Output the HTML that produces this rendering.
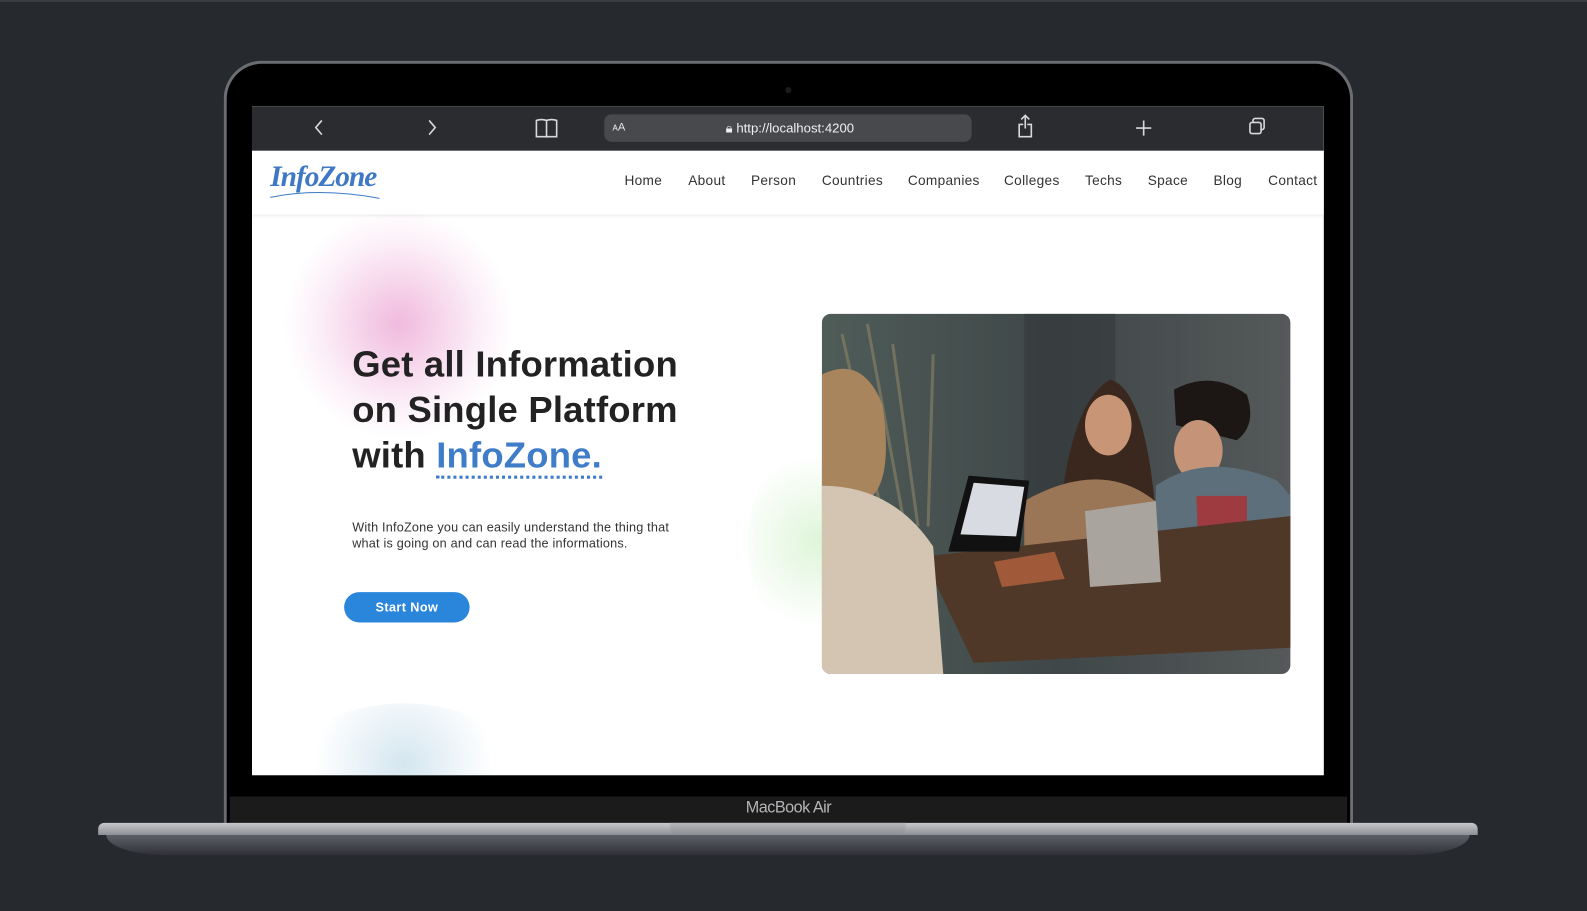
<!DOCTYPE html>
<html><head><meta charset="utf-8"><style>
*{margin:0;padding:0;box-sizing:border-box}
html,body{width:1587px;height:911px;background:#262a2f;overflow:hidden}
body{font-family:"Liberation Sans",sans-serif}
#wrap{position:absolute;left:0;top:0;width:1568px;height:900px;transform:scale(1.0121);transform-origin:0 0}
.abs{position:absolute}
</style></head><body><div id="wrap">
<div class="abs" style="left:0;top:0;width:1568px;height:2px;background:#3a3d42"></div>
<div class="abs" style="left:221px;top:60px;width:1116px;height:760px;border-radius:38px 38px 0 0;background:#000;border:3px solid #6a6d72;border-bottom:none"></div>
<div class="abs" style="left:776px;top:86px;width:6px;height:6px;border-radius:50%;background:#1c1c1e"></div>
<div class="abs" style="left:227px;top:787px;width:1104px;height:27px;background:#1b1b1c"></div>
<div class="abs" style="left:227px;top:790px;width:1104px;text-align:center;color:#b5b5b8;font-size:16px;letter-spacing:-0.5px">MacBook Air</div>
<div class="abs" style="left:97px;top:813px;width:1363px;height:12px;background:linear-gradient(#c8c9cc,#8d8f94);border-radius:6px 6px 0 0"></div>
<div class="abs" style="left:105px;top:825px;width:1347px;height:20px;background:linear-gradient(#5e6067,#2e3036);border-radius:0 0 60px 60px/0 0 20px 20px"></div>
<div class="abs" style="left:662px;top:813px;width:233px;height:12px;background:linear-gradient(#b7b8bb,#8c8d92);border-radius:0 0 8px 8px"></div>
<div class="abs" style="left:249px;top:105px;width:1059px;height:661px;background:#fff;overflow:hidden">
 <div class="abs" style="left:0;top:0;width:1059px;height:44px;background:#2a2c30"></div>
 <svg class="abs" style="left:0;top:0" width="1059" height="44" fill="none" stroke="#d8d8d8" stroke-width="1.6">
  <path d="M69 14l-6 7 6 7"/><path d="M175 14l6 7-6 7"/>
  <path d="M281 14v16h9c1 0 1 1 1 1v-17c-3-1-7-1-10 0zM301 14v16h-9c-1 0-1 1-1 1v-17c3-1 7-1 10 0z"/>
  <path d="M762 18h-4v12h12v-12h-4M764 22v-12M760 13l4-4 4 4"/>
  <path d="M881 14v15M873.5 21.5h15"/>
  <rect x="986" y="16" width="11" height="11" rx="2"/><path d="M989 16v-2c0-1 1-2 2-2h7c1 0 2 1 2 2v7c0 1-1 2-2 2h-1"/>
  <path d="M702 16a6 6 0 1 0 2 4M702 12v4h-4"/>
 </svg>
 <div class="abs" style="left:348px;top:8px;width:363px;height:27px;background:#48494d;border-radius:7px"></div>
 <div class="abs" style="left:356px;top:15px;color:#e5e5e5;font-size:11px">ᴀA</div>
 <div class="abs" style="left:468px;top:14px;color:#f0f0f0;font-size:13px">&#128274;&#xFE0E;<span style="font-size:13px"> http://localhost:4200</span></div>
 <div class="abs" style="left:0;top:44px;width:1059px;height:63px;background:#fff;box-shadow:0 2px 3px rgba(0,0,0,.08)"></div>
 <div class="abs" style="left:18px;top:54px;font-family:'Liberation Serif',serif;font-style:italic;font-weight:bold;font-size:29px;color:#3f78c4;letter-spacing:-1px">InfoZone</div>
 <svg class="abs" style="left:16px;top:80px" width="112" height="14"><path d="M2 10Q50 0 110 11" stroke="#3f78c4" fill="none" stroke-width="1"/></svg>
 <div class="abs" style="top:66px;left:0;width:1059px;font-size:13.5px;color:#333;letter-spacing:.3px">
  <span class="abs" style="left:368px">Home</span><span class="abs" style="left:431px">About</span><span class="abs" style="left:493px">Person</span><span class="abs" style="left:563px">Countries</span><span class="abs" style="left:648px">Companies</span><span class="abs" style="left:743px">Colleges</span><span class="abs" style="left:823px">Techs</span><span class="abs" style="left:885px">Space</span><span class="abs" style="left:950px">Blog</span><span class="abs" style="left:1004px">Contact</span>
 </div>
 <div class="abs" style="left:30px;top:100px;width:230px;height:230px;border-radius:50%;background:radial-gradient(circle,rgba(230,140,200,.6),rgba(240,180,220,.2) 50%,rgba(255,255,255,0) 70%)"></div>
 <div class="abs" style="left:40px;top:590px;width:220px;height:120px;border-radius:50%;background:radial-gradient(circle,rgba(170,205,225,.5),rgba(255,255,255,0) 70%)"></div>
 <div class="abs" style="left:490px;top:330px;width:140px;height:200px;border-radius:50%;background:radial-gradient(circle,rgba(190,235,180,.5),rgba(255,255,255,0) 70%)"></div>
 <div class="abs" style="left:99px;top:232px;font-size:36px;font-weight:bold;color:#222;line-height:45px;letter-spacing:.2px">Get all Information<br>on Single Platform<br>with <span style="color:#3f7dc9;border-bottom:3px dotted #3f7dc9">InfoZone.</span></div>
 <div class="abs" style="left:99px;top:408px;font-size:12.5px;color:#333;line-height:16px;letter-spacing:.2px">With InfoZone you can easily understand the thing that<br>what is going on and can read the informations.</div>
 <div class="abs" style="left:91px;top:480px;width:124px;height:30px;border-radius:15px;background:#2a86db;color:#fff;font-size:12.5px;font-weight:bold;text-align:center;line-height:30px;letter-spacing:.4px">Start Now</div>
 <svg class="abs" style="left:563px;top:205px;border-radius:9px" width="463" height="356" viewBox="0 0 463 356">
  <defs><linearGradient id="w" x1="0" y1="0" x2="1" y2="0"><stop offset="0" stop-color="#4f5c58"/><stop offset=".5" stop-color="#3f4748"/><stop offset="1" stop-color="#55595a"/></linearGradient></defs>
  <rect width="463" height="356" fill="url(#w)"/>
  <rect x="200" y="0" width="90" height="200" fill="#33393b" opacity=".6"/>
  <path d="M20 20L60 200M45 10L80 200M70 30L95 210M110 40L105 210" stroke="#8c8466" stroke-width="3" opacity=".6"/>
  <path d="M232 240Q240 90 285 65Q320 75 330 200L330 260z" fill="#3a271e"/>
  <ellipse cx="283" cy="110" rx="23" ry="30" fill="#c99577"/>
  <path d="M200 185Q280 140 335 190L335 300 200 300z" fill="#9a7556"/>
  <path d="M348 75Q385 55 420 80Q430 110 410 125L350 110z" fill="#1c1614"/>
  <ellipse cx="372" cy="135" rx="24" ry="30" fill="#c59478"/>
  <path d="M330 170Q380 135 450 165L463 180 463 300 330 300z" fill="#5e6f7c"/>
  <path d="M370 180L420 180 420 300 375 300z" fill="#9e3b40"/>
  <path d="M100 240L463 200 463 330 150 345z" fill="#4f3828"/>
  <path d="M260 195L330 185 335 265 265 270z" fill="#a9a49d"/>
  <path d="M145 160L205 165 195 235 125 235z" fill="#111"/><path d="M150 167L200 171 192 220 137 218z" fill="#d8dce2"/>
  <path d="M170 245L230 235 240 262 178 270z" fill="#a05a3a"/>
  <path d="M0 60Q40 40 60 90Q70 160 50 180L0 190z" fill="#a8855d"/>
  <path d="M0 170Q70 170 110 230L120 356 0 356z" fill="#d3c5b2"/>
 </svg>
</div>
</div></body></html>
